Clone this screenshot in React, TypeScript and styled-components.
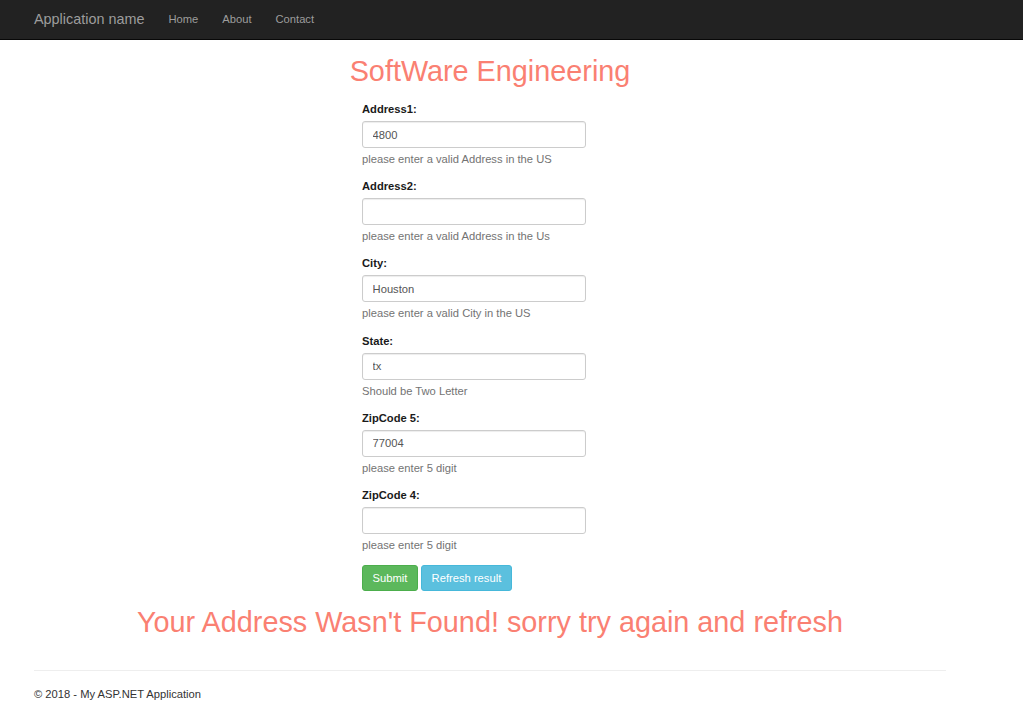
import React from "react";
import styled, { createGlobalStyle } from "styled-components";

const Global = createGlobalStyle`
  html, body { margin: 0; padding: 0; background: #fff; }
  body {
    font-family: "Liberation Sans", Arial, Helvetica, sans-serif;
    font-size: 11.2px;
    line-height: 16px;
    color: #333;
  }
  * { box-sizing: border-box; }
`;

const Navbar = styled.nav`
  height: 40px;
  background: #222;
  border-bottom: 1px solid #080808;
  display: flex;
  align-items: center;
  padding-left: 22px;
  padding-bottom: 2px;
`;

const Brand = styled.a`
  font-size: 14.4px;
  line-height: 16px;
  color: #9d9d9d;
  padding: 0 12px;
  text-decoration: none;
`;

const NavLink = styled.a`
  font-size: 11.2px;
  line-height: 16px;
  color: #9d9d9d;
  padding: 0 12px;
  text-decoration: none;
`;

const Container = styled.main`
  width: 912px;
  margin-left: 34px;
`;

const Title = styled.h1`
  margin: 15px 0 0;
  font-size: 28.8px;
  line-height: 32px;
  font-weight: normal;
  color: salmon;
  text-align: center;
`;

const Form = styled.form`
  margin-left: 328px;
  margin-top: 14px;
  width: 224px;
  display: flex;
  flex-direction: column;
`;

const Group = styled.div`
  display: flex;
  flex-direction: column;
  margin-bottom: 11.2px;
`;

const Label = styled.label`
  font-weight: bold;
  color: #1a1a1a;
  line-height: 16px;
  margin-bottom: 4px;
`;

const Input = styled.input`
  width: 224px;
  height: 27px;
  padding: 0 9.6px;
  font-family: inherit;
  font-size: 11.2px;
  color: #555;
  background: #fff;
  border: 1px solid #ccc;
  border-radius: 3px;
  box-shadow: inset 0 1px 1px rgba(0, 0, 0, 0.075);
  outline: none;
`;

const Help = styled.span`
  margin-top: 3px;
  line-height: 16px;
  color: #737373;
`;

const Buttons = styled.div`
  display: flex;
  gap: 3px;
  margin-top: 1px;
`;

const Button = styled.button<{ $variant: "success" | "info" }>`
  height: 26px;
  padding: 0 9.6px;
  font-family: inherit;
  font-size: 11.2px;
  color: #fff;
  border-radius: 3px;
  cursor: pointer;
  background: ${(p) => (p.$variant === "success" ? "#5cb85c" : "#5bc0de")};
  border: 1px solid ${(p) => (p.$variant === "success" ? "#4cae4c" : "#46b8da")};
`;

const Message = styled.h1`
  margin: 15px 0 0;
  font-size: 28.8px;
  line-height: 32px;
  font-weight: normal;
  color: salmon;
  text-align: center;
`;

const Rule = styled.hr`
  margin: 32px 0 0;
  border: 0;
  border-top: 1px solid #eee;
`;

const Footer = styled.footer`
  margin-top: 15px;
  line-height: 16px;
  color: #333;
`;

const fields = [
  { label: "Address1:", value: "4800", help: "please enter a valid Address in the US" },
  { label: "Address2:", value: "", help: "please enter a valid Address in the Us" },
  { label: "City:", value: "Houston", help: "please enter a valid City in the US" },
  { label: "State:", value: "tx", help: "Should be Two Letter" },
  { label: "ZipCode 5:", value: "77004", help: "please enter 5 digit" },
  { label: "ZipCode 4:", value: "", help: "please enter 5 digit" },
];

export default function App() {
  return (
    <>
      <Global />
      <Navbar>
        <Brand href="#">Application name</Brand>
        <NavLink href="#">Home</NavLink>
        <NavLink href="#">About</NavLink>
        <NavLink href="#">Contact</NavLink>
      </Navbar>
      <Container>
        <Title>SoftWare Engineering</Title>
        <Form onSubmit={(e) => e.preventDefault()}>
          {fields.map((f) => (
            <Group key={f.label}>
              <Label>{f.label}</Label>
              <Input defaultValue={f.value} />
              <Help>{f.help}</Help>
            </Group>
          ))}
          <Buttons>
            <Button $variant="success" type="submit">Submit</Button>
            <Button $variant="info" type="button">Refresh result</Button>
          </Buttons>
        </Form>
        <Message>Your Address Wasn't Found! sorry try again and refresh</Message>
        <Rule />
        <Footer>© 2018 - My ASP.NET Application</Footer>
      </Container>
    </>
  );
}
